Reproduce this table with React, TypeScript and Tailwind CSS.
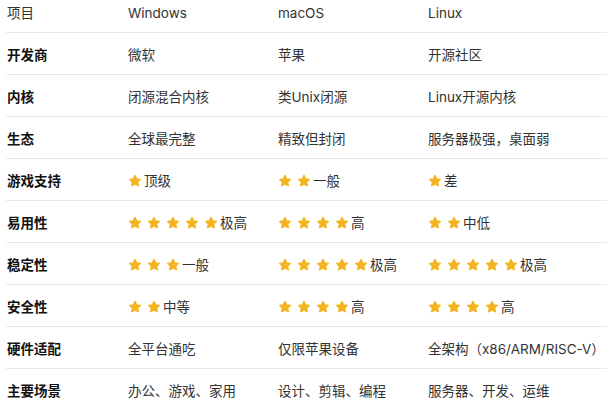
import React from "react";

type Cell = string | { stars: number; text: string };

const rows: { label: string; cells: Cell[] }[] = [
    { label: "开发商", cells: ["微软", "苹果", "开源社区"] },
    { label: "内核", cells: ["闭源混合内核", "类Unix闭源", "Linux开源内核"] },
    { label: "生态", cells: ["全球最完整", "精致但封闭", "服务器极强，桌面弱"] },
    { label: "游戏支持", cells: [{ stars: 1, text: "顶级" }, { stars: 2, text: "一般" }, { stars: 1, text: "差" }] },
    { label: "易用性", cells: [{ stars: 5, text: "极高" }, { stars: 4, text: "高" }, { stars: 2, text: "中低" }] },
    { label: "稳定性", cells: [{ stars: 3, text: "一般" }, { stars: 5, text: "极高" }, { stars: 5, text: "极高" }] },
    { label: "安全性", cells: [{ stars: 2, text: "中等" }, { stars: 4, text: "高" }, { stars: 4, text: "高" }] },
    { label: "硬件适配", cells: ["全平台通吃", "仅限苹果设备", "全架构（x86/ARM/RISC-V）"] },
    { label: "主要场景", cells: ["办公、游戏、家用", "设计、剪辑、编程", "服务器、开发、运维"] },
];

function Star() {
    return (
        <svg width="14" height="14" viewBox="0 0 24 24" className="shrink-0">
            <path
                d="M12 2.8l2.7 5.9 6.3.7-4.7 4.3 1.3 6.3L12 16.8 6.4 20l1.3-6.3L3 9.4l6.3-.7z"
                fill="#f3b41f"
                stroke="#f3b41f"
                strokeWidth="2.6"
                strokeLinejoin="round"
            />
        </svg>
    );
}

function Value({ cell }: { cell: Cell }) {
    if (typeof cell === "string") return <span>{cell}</span>;
    return (
        <div className="flex items-center">
            <div className="flex items-center gap-[5px]">
                {Array.from({ length: cell.stars }).map((_, i) => (
                    <Star key={i} />
                ))}
            </div>
            <span className="ml-[2px]">{cell.text}</span>
        </div>
    );
}

export default function App() {
    return (
        <div
            className="w-[607px] h-[400px] overflow-hidden bg-white text-[13.5px] text-[#333]"
            style={{ fontFamily: '"Inter", "Noto Sans CJK SC", sans-serif' }}>
            <div className="ml-[6px]">
                <div className="grid grid-cols-[121px_150px_150px_1fr] h-[33px] items-center pb-[5px] pl-[1px] border-b border-[#e9e9e9]">
                    <span>项目</span>
                    <span>Windows</span>
                    <span>macOS</span>
                    <span>Linux</span>
                </div>
                {rows.map((r) => (
                    <div
                        key={r.label}
                        className="grid grid-cols-[121px_150px_150px_1fr] h-[42px] items-center pt-[3px] pl-[1px] border-b border-[#e9e9e9]">
                        <span className="font-bold text-[#111]">{r.label}</span>
                        {r.cells.map((c, i) => (
                            <Value key={i} cell={c} />
                        ))}
                    </div>
                ))}
            </div>
        </div>
    );
}
